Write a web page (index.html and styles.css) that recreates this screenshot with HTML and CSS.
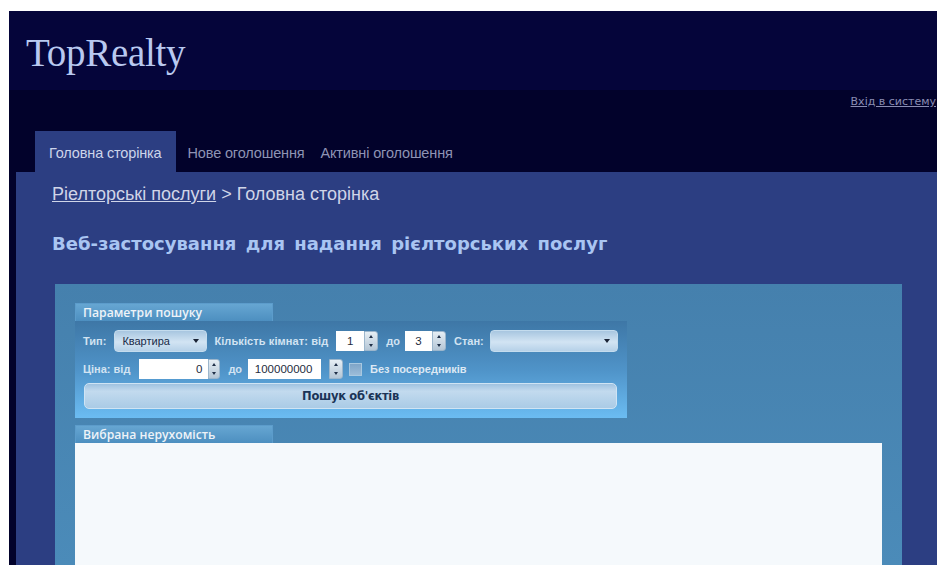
FILE: index.html
```html
<!DOCTYPE html>
<html lang="uk">
<head>
<meta charset="utf-8">
<title>TopRealty</title>
<link rel="stylesheet" href="styles.css">
</head>
<body>
<div class="site">
  <header class="masthead">
    <div class="logo">TopRealty</div>
  </header>
  <div class="navbar">
    <div class="login-row"><a href="#" class="login">Вхід в систему</a></div>
    <nav class="tabs">
      <a href="#" class="tab active">Головна сторінка</a>
      <a href="#" class="tab">Нове оголошення</a>
      <a href="#" class="tab">Активні оголошення</a>
    </nav>
  </div>
  <main class="main">
    <div class="crumbs"><a href="#">Ріелторські послуги</a> &gt; Головна сторінка</div>
    <h1 class="title">Веб-застосування для надання рієлторських послуг</h1>
    <section class="panel">
      <div class="group search">
        <div class="group-head">Параметри пошуку</div>
        <div class="group-body">
          <div class="row">
            <span class="lbl">Тип:</span>
            <span class="select type"><span class="val">Квартира</span><span class="caret"></span></span>
            <span class="lbl rooms">Кількість кімнат: від</span>
            <span class="spin rooms-from"><span class="num">1</span><span class="btns"><i class="up"></i><i class="down"></i></span></span>
            <span class="lbl to">до</span>
            <span class="spin rooms-to"><span class="num">3</span><span class="btns"><i class="up"></i><i class="down"></i></span></span>
            <span class="lbl state-lbl">Стан:</span>
            <span class="select state"><span class="val"></span><span class="caret"></span></span>
          </div>
          <div class="row">
            <span class="lbl">Ціна: від</span>
            <span class="spin price-from"><span class="num">0</span><span class="btns"><i class="up"></i><i class="down"></i></span></span>
            <span class="lbl to">до</span>
            <span class="spin price-to"><span class="num">100000000</span><span class="btns"><i class="up"></i><i class="down"></i></span></span>
            <span class="check"></span>
            <span class="lbl plain">Без посередників</span>
          </div>
          <button class="find">Пошук об'єктів</button>
        </div>
      </div>
      <div class="group chosen">
        <div class="group-head">Вибрана нерухомість</div>
        <div class="chosen-body"></div>
      </div>
    </section>
  </main>
</div>
</body>
</html>
```
FILE: styles.css
```css
html, body {
  margin: 0;
  padding: 0;
  background: #ffffff;
  height: 100%;
  overflow: hidden;
}
body {
  padding: 11px 0 0 9px;
  box-sizing: border-box;
}
.site {
  background: #02022b;
  height: 100%;
  display: flex;
  flex-direction: column;
}

/* header with the site name */
.masthead {
  height: 79px;
  background: #05053a;
  padding-left: 17px;
  box-sizing: border-box;
}
.logo {
  font-family: "Liberation Serif", "DejaVu Serif", serif;
  font-size: 39px;
  line-height: 44px;
  color: #b9c9f0;
  padding-top: 20px;
  letter-spacing: -0.3px;
}

/* login link and tabs */
.navbar {
  height: 82px;
  display: flex;
  flex-direction: column;
  justify-content: space-between;
}
.login-row {
  display: flex;
  justify-content: flex-end;
  padding-top: 5px;
}
.login {
  font-family: "DejaVu Sans", Verdana, sans-serif;
  font-size: 11px;
  color: #8a8db3;
  margin-right: 1px;
}
.tabs {
  display: flex;
  padding-left: 26px;
  height: 41px;
}
.tab {
  font-family: "Liberation Sans", Arial, sans-serif;
  font-size: 14.5px;
  color: #8e93b4;
  text-decoration: none;
  padding: 14px 8px 0 8px;
  letter-spacing: -0.15px;
}
.tab.active {
  background: #2c3e82;
  color: #cdd4ea;
  padding: 14px 14px 0 14px;
  margin-right: 4px;
}

/* content */
.main {
  flex: 1;
  margin-left: 7px;
  background: #2c3e82;
  padding: 12px 35px 0 36px;
  display: flex;
  flex-direction: column;
}
.crumbs {
  font-family: "Liberation Sans", Arial, sans-serif;
  font-size: 18px;
  line-height: 20px;
  color: #d0d5e8;
}
.crumbs a {
  color: #d0d5e8;
}
.title {
  font-family: "DejaVu Sans", Verdana, sans-serif;
  font-weight: bold;
  font-size: 18px;
  line-height: 22px;
  color: #a9c5f2;
  margin: 29px 0 0 0;
  word-spacing: 3px;
}
.panel {
  margin: 29px 0 0 3px;
  flex: 1;
  background: linear-gradient(#4580ad, #4b8bb9);
  padding: 19px 20px 0 20px;
  display: flex;
  flex-direction: column;
  font-family: "Liberation Sans", Arial, sans-serif;
}
.group-head {
  width: 198px;
  height: 18px;
  box-sizing: border-box;
  background: linear-gradient(#66a6d2, #4d8fc0);
  border: 1px solid #5c9ccb;
  border-bottom: none;
  color: #eef3f8;
  font-family: "Open Sans", "DejaVu Sans", sans-serif;
  font-weight: 600;
  font-size: 12.2px;
  padding: 0 0 0 7px;
  line-height: 17px;
}
.group-body {
  width: 552px;
  background: linear-gradient(#3e77a6 0%, #4f93c8 50%, #6bbcf2 100%);
  padding: 9px 9px 9px 8px;
  box-sizing: border-box;
}
.row {
  display: flex;
  align-items: center;
  height: 22px;
  margin-bottom: 6px;
}
.row > * {
  flex-shrink: 0;
}
.row:nth-child(2) {
  margin-bottom: 3px;
}
.lbl {
  font-size: 11px;
  font-weight: bold;
  color: #d2e3f2;
  white-space: nowrap;
}
.lbl.rooms { margin-left: 7px; letter-spacing: 0.1px; }
.lbl.to { margin-left: 8px; }
.lbl.state-lbl { margin-left: 8px; }
.lbl.plain { margin-left: 8px; color: #dce8f4; }

.select {
  height: 22px;
  box-sizing: border-box;
  border: 1px solid #c4dcee;
  border-radius: 4px;
  background: linear-gradient(#a8c6e0, #d2e4f3 55%, #b6d1e8);
  display: flex;
  align-items: center;
  justify-content: space-between;
  padding: 0 7px 0 7px;
  margin-left: 8px;
}
.select.type { width: 93px; }
.select.state { width: 128px; margin-left: 6px; }
.select .val {
  font-size: 11px;
  color: #182a48;
}
.caret {
  width: 0;
  height: 0;
  border-left: 3px solid transparent;
  border-right: 3px solid transparent;
  border-top: 4px solid #1a2436;
}

/* numeric inputs with up/down buttons */
.spin {
  display: flex;
  height: 20px;
  margin-left: 7px;
}
.spin .num {
  background: #ffffff;
  font-size: 11.5px;
  color: #1e2c40;
  display: flex;
  align-items: center;
  justify-content: center;
  box-sizing: border-box;
}
.spin.rooms-from { margin-left: 8px; }
.spin.rooms-from .num { width: 28px; }
.spin.rooms-to { margin-left: 5px; }
.spin.rooms-to .num { width: 27px; }
.spin.price-from { margin-left: 9px; }
.spin.price-from .num {
  width: 69px;
  justify-content: flex-end;
  padding-right: 6px;
}
.spin.price-to { margin-left: 6px; }
.spin.price-to .num {
  width: 73px;
  padding-right: 2px;
  margin-right: 8px;
}
.btns {
  width: 14px;
  display: flex;
  flex-direction: column;
  background: linear-gradient(#e6eef4, #b4c6d6);
  border: 1px solid #9cb6cc;
  border-radius: 0 3px 3px 0;
  box-sizing: border-box;
}
.price-from .btns { width: 12px; }
.btns i {
  flex: 1;
  display: flex;
  align-items: center;
  justify-content: center;
}
.btns i::after {
  content: "";
  width: 0;
  height: 0;
  border-left: 2.5px solid transparent;
  border-right: 2.5px solid transparent;
}
.btns .up::after { border-bottom: 3px solid #203048; }
.btns .down::after { border-top: 3px solid #203048; }
.check {
  width: 13px;
  height: 13px;
  box-sizing: border-box;
  background: linear-gradient(#7fa5c8, #9cbcd8);
  border: 1px solid #a8c8e0;
  margin-left: 6px;
}
.find {
  display: block;
  width: 533px;
  height: 26px;
  margin-left: 1px;
  border: 1px solid #cfe4f4;
  border-radius: 5px;
  background: linear-gradient(#9fc2e0 0%, #c2daee 30%, #aacbe6 100%);
  font-family: "DejaVu Sans", Verdana, sans-serif;
  font-weight: bold;
  font-size: 11.5px;
  letter-spacing: -0.3px;
  color: #1b3456;
  padding: 0;
}
.chosen {
  margin-top: 7px;
  flex: 1;
  display: flex;
  flex-direction: column;
}
.chosen-body {
  flex: 1;
  background: #f5f9fc;
}
```
